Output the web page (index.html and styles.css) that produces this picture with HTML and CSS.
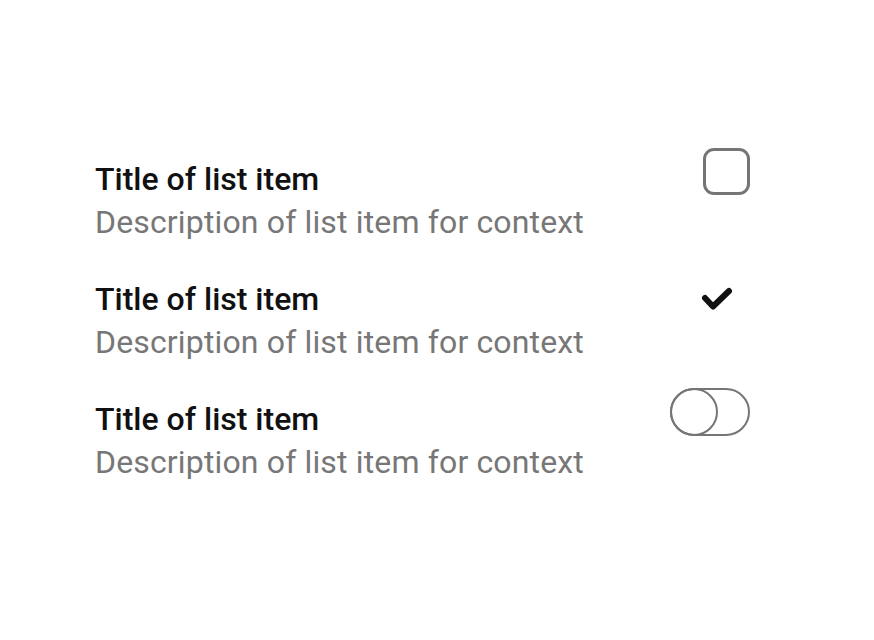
FILE: index.html
```html
<!DOCTYPE html>
<html>
<head>
<meta charset="utf-8">
<link rel="stylesheet" href="styles.css">
</head>
<body>
<ul class="list">
  <li class="item">
    <div class="text">
      <div class="title">Title of list item</div>
      <div class="desc">Description of list item for context</div>
    </div>
    <div class="control">
      <span class="checkbox"></span>
    </div>
  </li>
  <li class="item">
    <div class="text">
      <div class="title">Title of list item</div>
      <div class="desc">Description of list item for context</div>
    </div>
    <div class="control">
      <svg class="check" width="48" height="48" viewBox="0 0 48 48"><polyline points="10,16 18,24.5 34,9" fill="none" stroke="#111" stroke-width="6" stroke-linecap="round" stroke-linejoin="round"/></svg>
    </div>
  </li>
  <li class="item">
    <div class="text">
      <div class="title">Title of list item</div>
      <div class="desc">Description of list item for context</div>
    </div>
    <div class="control">
      <span class="toggle"><span class="knob"></span></span>
    </div>
  </li>
</ul>
</body>
</html>
```

FILE: styles.css
```css
html, body {
  margin: 0;
  padding: 0;
  background: #fff;
}
body {
  font-family: Roboto, "Liberation Sans", sans-serif;
}
.list {
  list-style: none;
  margin: 0;
  padding: 148px 0 0 95px;
  width: 655px;
  display: flex;
  flex-direction: column;
  gap: 24px;
}
.item {
  display: flex;
  align-items: flex-start;
  justify-content: space-between;
}
.text {
  padding-top: 10px;
}
.title {
  font-size: 32px;
  line-height: 43px;
  font-weight: 500;
  color: #111;
}
.desc {
  font-size: 32px;
  line-height: 43px;
  color: #777;
  letter-spacing: 0.15px;
}
.control {
  width: 80px;
  height: 48px;
  display: flex;
  align-items: flex-start;
  justify-content: flex-end;
}
.checkbox {
  box-sizing: border-box;
  width: 47px;
  height: 47px;
  border: 3px solid #757575;
  border-radius: 11px;
}
.check {
  display: block;
  margin-right: 7px;
  margin-top: 14px;
}
.toggle {
  box-sizing: border-box;
  width: 80px;
  height: 48px;
  border: 2px solid #757575;
  border-radius: 24px;
  display: flex;
}
.knob {
  box-sizing: border-box;
  width: 48px;
  height: 48px;
  margin: -2px;
  border: 2px solid #757575;
  border-radius: 50%;
}
```
